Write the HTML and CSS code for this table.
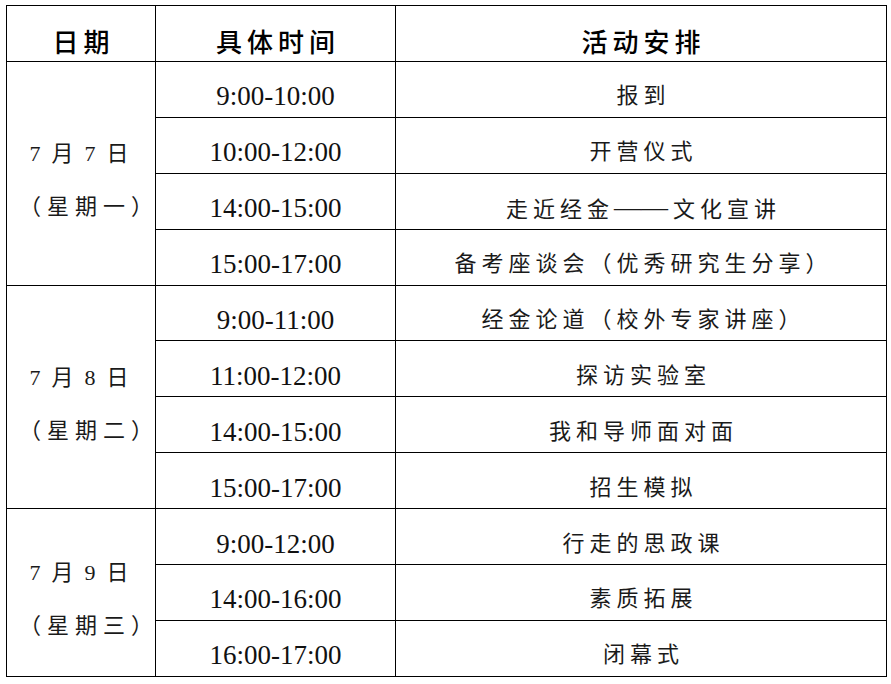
FILE: index.html
```html
<!DOCTYPE html>
<html lang="zh-CN">
<head>
<meta charset="utf-8">
<title>日程安排</title>
<link rel="stylesheet" href="styles.css">
</head>
<body>
<table class="schedule">
  <colgroup>
    <col class="c-date">
    <col class="c-time">
    <col class="c-act">
  </colgroup>
  <thead>
    <tr class="head-row">
      <th>日期</th>
      <th>具体时间</th>
      <th>活动安排</th>
    </tr>
  </thead>
  <tbody>
    <tr>
      <td class="date" rowspan="4"><span class="d1">7月7日</span><span class="d2">（星期一）</span></td>
      <td class="time">9:00-10:00</td>
      <td class="act">报到</td>
    </tr>
    <tr>
      <td class="time">10:00-12:00</td>
      <td class="act">开营仪式</td>
    </tr>
    <tr>
      <td class="time">14:00-15:00</td>
      <td class="act">走近经金<span class="dash">——</span>文化宣讲</td>
    </tr>
    <tr>
      <td class="time">15:00-17:00</td>
      <td class="act">备考座谈会（优秀研究生分享）</td>
    </tr>
    <tr>
      <td class="date" rowspan="4"><span class="d1">7月8日</span><span class="d2">（星期二）</span></td>
      <td class="time">9:00-11:00</td>
      <td class="act">经金论道（校外专家讲座）</td>
    </tr>
    <tr>
      <td class="time">11:00-12:00</td>
      <td class="act">探访实验室</td>
    </tr>
    <tr>
      <td class="time">14:00-15:00</td>
      <td class="act">我和导师面对面</td>
    </tr>
    <tr>
      <td class="time">15:00-17:00</td>
      <td class="act">招生模拟</td>
    </tr>
    <tr>
      <td class="date" rowspan="3"><span class="d1">7月9日</span><span class="d2">（星期三）</span></td>
      <td class="time">9:00-12:00</td>
      <td class="act">行走的思政课</td>
    </tr>
    <tr>
      <td class="time">14:00-16:00</td>
      <td class="act">素质拓展</td>
    </tr>
    <tr>
      <td class="time">16:00-17:00</td>
      <td class="act">闭幕式</td>
    </tr>
  </tbody>
</table>
</body>
</html>
```
FILE: styles.css
```css
html, body {
  margin: 0;
  background: #ffffff;
}

body {
  padding: 5px 0 0 6px;
  font-family: "Liberation Serif", "Noto Sans CJK SC", serif;
  color: #111111;
}

.schedule {
  border-collapse: collapse;
  table-layout: fixed;
  width: 880px;
}

.c-date { width: 149px; }
.c-time { width: 240px; }
.c-act { width: 491px; }

.schedule th,
.schedule td {
  border: 1px solid #000000;
  padding: 14px 0 0 0;
  text-align: center;
  vertical-align: middle;
  line-height: 28px;
}

.head-row {
  height: 56px;
}

.schedule tbody tr {
  height: 55.9px;
}

.schedule th {
  font-family: "Noto Sans CJK SC", sans-serif;
  font-size: 26px;
  font-weight: 500;
  letter-spacing: 5px;
  padding-left: 5px;
  color: #000000;
}

.schedule td.time {
  font-size: 27px;
}

.schedule td.act {
  font-family: "Liberation Serif", "Noto Sans CJK SC", serif;
  font-size: 22px;
  letter-spacing: 5px;
  padding-left: 5px;
  color: #1a1a1a;
}

.act .dash {
  letter-spacing: 0;
  font-size: 27px;
  margin-right: 5px;
  vertical-align: 1px;
}

.schedule td.date {
  font-size: 22px;
  line-height: 53px;
  color: #1a1a1a;
}

.date span {
  display: block;
}

.d1 {
  letter-spacing: 11px;
  padding-left: 7px;
}

.d2 {
  letter-spacing: 6px;
  padding-left: 12px;
}
```
